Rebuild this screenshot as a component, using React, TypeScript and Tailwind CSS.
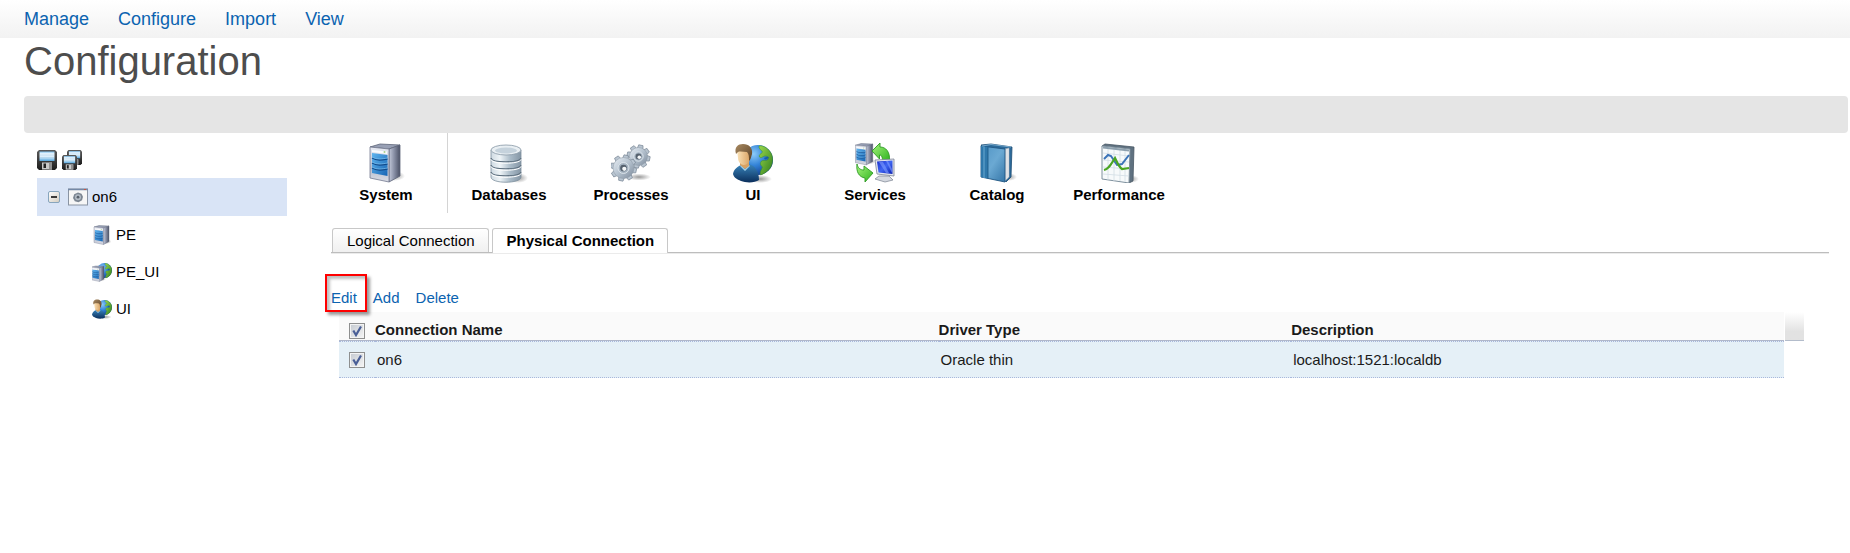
import { useState } from "react";
import type { ReactNode } from "react";

/* Gradients shared by all icons */
function Gradients() {
  return (
    <svg className="absolute size-0" aria-hidden="true">
      <defs>
        <linearGradient id="steel" x1="0" x2="1">
          <stop offset="0" stopColor="#c3c9da" />
          <stop offset=".45" stopColor="#8b92a8" />
          <stop offset="1" stopColor="#4b5166" />
        </linearGradient>
        <linearGradient id="steelFront" x1="0" x2="0" y1="0" y2="1">
          <stop offset="0" stopColor="#e9ecf4" />
          <stop offset=".6" stopColor="#b9bfcf" />
          <stop offset="1" stopColor="#d8dbe4" />
        </linearGradient>
        <linearGradient id="bluePanel" x1="0" x2="1" y1="0" y2="1">
          <stop offset="0" stopColor="#5fb4ee" />
          <stop offset="1" stopColor="#1765b4" />
        </linearGradient>
        <linearGradient id="drum" x1="0" x2="1">
          <stop offset="0" stopColor="#cfdae2" />
          <stop offset=".3" stopColor="#eef4f7" />
          <stop offset=".65" stopColor="#a9bac7" />
          <stop offset="1" stopColor="#8596a5" />
        </linearGradient>
        <linearGradient id="gearFill" x1="0" x2="1" y1="0" y2="1">
          <stop offset="0" stopColor="#e9eff5" />
          <stop offset=".5" stopColor="#b4c1ce" />
          <stop offset="1" stopColor="#7d8b9b" />
        </linearGradient>
        <radialGradient id="ocean" cx=".35" cy=".3" r=".75">
          <stop offset="0" stopColor="#8ccbf8" />
          <stop offset=".5" stopColor="#3484d8" />
          <stop offset="1" stopColor="#123f8f" />
        </radialGradient>
        <linearGradient id="land" x1="0" x2="1" y1="0" y2="1">
          <stop offset="0" stopColor="#9ad84c" />
          <stop offset="1" stopColor="#2f7d1c" />
        </linearGradient>
        <linearGradient id="shirt" x1="0" x2="0" y1="0" y2="1">
          <stop offset="0" stopColor="#3a86bd" />
          <stop offset="1" stopColor="#0b2f5c" />
        </linearGradient>
        <linearGradient id="skin" x1="0" x2="1">
          <stop offset="0" stopColor="#fbe3b8" />
          <stop offset="1" stopColor="#d9a263" />
        </linearGradient>
        <linearGradient id="hair" x1="0" x2="1" y1="0" y2="1">
          <stop offset="0" stopColor="#a98a62" />
          <stop offset="1" stopColor="#5a4024" />
        </linearGradient>
        <linearGradient id="arrow" x1="0" x2="1" y1="0" y2="1">
          <stop offset="0" stopColor="#a8f57e" />
          <stop offset="1" stopColor="#2fb31f" />
        </linearGradient>
        <linearGradient id="screen" x1="0" x2="1" y1="0" y2="1">
          <stop offset="0" stopColor="#1a2fc9" />
          <stop offset=".5" stopColor="#3f66f2" />
          <stop offset="1" stopColor="#0a1fb0" />
        </linearGradient>
        <linearGradient id="cover" x1="0" x2="1" y1="0" y2="1">
          <stop offset="0" stopColor="#4f93c4" />
          <stop offset=".5" stopColor="#6ba9d3" />
          <stop offset="1" stopColor="#3576a8" />
        </linearGradient>
        <linearGradient id="disk" x1="0" x2="0" y1="0" y2="1">
          <stop offset="0" stopColor="#5b5b5b" />
          <stop offset="1" stopColor="#1c1c1c" />
        </linearGradient>
        <linearGradient id="diskLabel" x1="0" x2="0" y1="0" y2="1">
          <stop offset="0" stopColor="#7cc0ee" />
          <stop offset=".25" stopColor="#f3faff" />
          <stop offset=".6" stopColor="#d5ecfa" />
          <stop offset="1" stopColor="#4fa3dd" />
        </linearGradient>
        <linearGradient id="expander" x1="0" x2="1" y1="0" y2="1">
          <stop offset="0" stopColor="#ffffff" />
          <stop offset="1" stopColor="#d3ccbf" />
        </linearGradient>
        <radialGradient id="shadow">
          <stop offset="0" stopColor="#555" stopOpacity=".6" />
          <stop offset="1" stopColor="#555" stopOpacity="0" />
        </radialGradient>
      </defs>
    </svg>
  );
}

function Server() {
  return (
    <g>
      <ellipse cx="28" cy="33" rx="11" ry="5" fill="url(#shadow)" />
      <path d="M4 4 14 1 34 2 23 6z" fill="#98a0b5" stroke="#5d6479" strokeWidth=".8" />
      <path d="M23 6 34 2V33L23 39z" fill="url(#steel)" stroke="#5d6479" strokeWidth=".8" />
      <path d="M4 4 23 6V39L4 35z" fill="url(#steelFront)" stroke="#737a8f" strokeWidth=".8" />
      <path d="M6 10 21.500 12V33L6 30z" fill="url(#bluePanel)" />
      <path d="M6 15c5 3 10 2 15.500 1M6 20c5 3 10 2 15.500 1M6 25c5 3 10 2 15.500 1" fill="none" stroke="#0f4a8c" strokeWidth="1.300" />
      <path d="M6 14c5 3 10 2 15.500 1M6 19c5 3 10 2 15.500 1M6 24c5 3 10 2 15.500 1" fill="none" stroke="#8fd0f8" strokeWidth=".6" />
      <path d="M6 7 21 8.500V11L6 9z" fill="#fafbfd" />
      <circle cx="18.500" cy="9" r="1" fill="#a9d08c" />
    </g>
  );
}

function Globe() {
  return (
    <g>
      <circle cx="25" cy="17" r="15" fill="url(#ocean)" />
      <path
        d="M26 3c5-1 10 3 12.500 8 2 5 1 11-2 15-3 3-6 5-9 6-1-3 1-5 2-8-2-2-3-3-1-6 2-1 4 0 6-1 2-2 0-4-2-4-3 0-4 3-6 1-1-3 2-3 3-5-1-2-4-3-3.500-6z"
        fill="url(#land)"
        stroke="#3f8f25"
        strokeWidth=".5"
      />
      <path d="M31 15l4-1.500 1 1.500-4 1.500z" fill="#1b5f9f" />
    </g>
  );
}

function UserGlobe() {
  return (
    <g>
      <ellipse cx="27" cy="36" rx="12" ry="4" fill="url(#shadow)" />
      <Globe />
      <path d="M0 31c1-5 4-7 8-9l8-1c6 2 10 7 10 16-4 3-13 3-18 1-4-2-7-3-8-7z" fill="url(#shirt)" />
      <path d="M8 22l4 4 4-4 1 1-5 5-5-5z" fill="#9ccdea" />
      <path d="M7 17h9v6l-4 3-5-4z" fill="#d9a263" />
      <path d="M4 7c0-4 13-4 13 1v7c0 4-3 7-6 7s-6-3-6-7z" fill="url(#skin)" />
      <path d="M3 11C1 4 5 1 10 1c6 0 10 4 9 10-1 3-1 5-3 7 0-4 0-7-2-9-3 0-7-1-9 0z" fill="url(#hair)" />
    </g>
  );
}

const TEETH = [0, 45, 90, 135, 180, 225, 270, 315];

function Gear({ cx, cy, r }: { cx: number; cy: number; r: number }) {
  return (
    <g transform={`translate(${cx} ${cy})`}>
      {TEETH.map((a) => (
        <path
          key={a}
          transform={`rotate(${a + 12})`}
          d={`M-3 ${-r + 2}L-2.200 ${-r - 2.500}H2.200L3 ${-r + 2}z`}
          fill="#b9c5d1"
          stroke="#7c8997"
          strokeWidth=".7"
        />
      ))}
      <circle r={r} fill="url(#gearFill)" stroke="#8c98a5" strokeWidth=".5" />
      <circle r={r * 0.52} fill="#a5b3c1" stroke="#e6edf3" strokeWidth=".8" />
      <circle r={r * 0.32} fill="#55616e" />
      <circle cx=".8" cy=".8" r={r * 0.2} fill="#f4f7f9" />
    </g>
  );
}

function Databases() {
  return (
    <g>
      <ellipse cx="29" cy="35" rx="10" ry="5" fill="url(#shadow)" />
      <path d="M2 7v27c0 7 30 7 30 0V7z" fill="url(#drum)" stroke="#7f909e" strokeWidth=".8" />
      <path d="M2 15c1 5 29 5 30 0M2 22c1 5 29 5 30 0M2 29c1 5 29 5 30 0" fill="none" stroke="#5c6e7d" strokeWidth="1.200" />
      <path d="M2 16.500c1 5 29 5 30 0M2 23.500c1 5 29 5 30 0M2 30.500c1 5 29 5 30 0" fill="none" stroke="#fff" strokeWidth="1" />
      <ellipse cx="17" cy="7" rx="15" ry="5" fill="#e9eff3" stroke="#8797a4" strokeWidth=".8" />
      <ellipse cx="17" cy="7.500" rx="11" ry="3" fill="#c5d2dc" />
    </g>
  );
}

function Processes() {
  return (
    <g>
      <ellipse cx="28" cy="34" rx="12" ry="3.500" fill="url(#shadow)" />
      <Gear cx={27.5} cy={13.5} r={9} />
      <Gear cx={12.5} cy={25} r={10.5} />
    </g>
  );
}

function Services() {
  return (
    <g>
      <g transform="translate(-2 0) scale(.58 .56)">
        <Server />
      </g>
      <path d="M17 8 25 0V4c6 0 10 5 9.500 13l-7 1c0-4-1-6-3-6v4z" fill="url(#arrow)" stroke="#2c9a22" strokeWidth=".9" />
      <path d="M2 21c1 4 3 6 7 6v-4l9 7-8 9v-4C4 34 1 29 2 21z" fill="url(#arrow)" stroke="#2c9a22" strokeWidth=".9" />
      <path d="M24 33h10l4 4-8 2-10-3z" fill="#d4d8df" stroke="#7a8290" strokeWidth=".7" />
      <path d="M20 17l19-1v17l-17-2z" fill="#e4e7ee" stroke="#7c8496" strokeWidth=".8" />
      <path d="M22 18.500l15.500-1V31L23.500 29.500z" fill="url(#screen)" />
      <path d="M24 19l4 0 6 11h-3zM31 18h2l4 8v4z" fill="#7f9cff" opacity=".6" />
    </g>
  );
}

function Catalog() {
  return (
    <g>
      <ellipse cx="31" cy="34" rx="9" ry="4" fill="url(#shadow)" />
      <path d="M4 2 14 1 35 4 34 34 29 39z" fill="#2c6a9a" stroke="#1d4d74" strokeWidth=".8" />
      <path d="M28 6 32 5V34l-4 4z" fill="#f1f3f5" stroke="#9aa6b1" strokeWidth=".6" />
      <path d="M30 6V36" stroke="#b9c2ca" strokeWidth=".7" />
      <path d="M4 3 28 6V39L4 34z" fill="url(#cover)" stroke="#1f5682" strokeWidth=".9" />
      <path d="M4 3 11 4V35.500L4 34z" fill="#2f78ab" />
      <path d="M7 3.500V35" stroke="#78b6dc" strokeWidth=".8" />
      <path d="M11 4V35.500" stroke="#1b5580" strokeWidth=".8" />
      <path d="M5 3 14 1.500 34 4" fill="none" stroke="#8bbddd" strokeWidth=".8" />
    </g>
  );
}

function Performance() {
  return (
    <g>
      <ellipse cx="31" cy="36" rx="9" ry="4" fill="url(#shadow)" />
      <path d="M3 3 6 1 35 4 34 38 30 40z" fill="#5f7180" stroke="#475763" strokeWidth=".8" />
      <path d="M3 3 31 6 30 40 3 36z" fill="#f7fafb" stroke="#7e909d" strokeWidth="1" />
      <path d="M9 4v33M15 5v33M21 6v32M26 6v33M4 10l26 3M4 17l26 2M4 24l26 2M4 31l26 2" stroke="#d2dde5" strokeWidth=".8" />
      <path d="M4 4.500 30 7.500" stroke="#8da0ae" strokeWidth="2" />
      <path d="M5 16 9 12l3 1 6 9 5-1 7-9" fill="none" stroke="#3c74b8" strokeWidth="2" />
      <path d="M5 27c5-1 7-6 11-12 3 6 4 9 7 11l7-1" fill="none" stroke="#4aa522" strokeWidth="2.200" />
    </g>
  );
}

function Icon({ children }: { children: ReactNode }) {
  return (
    <svg className="block size-10" viewBox="0 0 40 40" aria-hidden="true">
      {children}
    </svg>
  );
}

function SmallIcon({ children }: { children: ReactNode }) {
  return (
    <svg className="block size-5 shrink-0" viewBox="0 0 40 40" aria-hidden="true">
      {children}
    </svg>
  );
}

function Floppy() {
  return (
    <g>
      <path d="M2 0H18L20 2V18L18 20H2L0 18V2z" fill="url(#disk)" />
      <rect x="2.500" y="1.500" width="15" height="9.500" fill="url(#diskLabel)" />
      <path d="M3 5h14M3 7.500h14" stroke="#a9cfe8" strokeWidth=".6" />
      <rect x="5" y="12.500" width="10" height="7" fill="#c9c9c9" />
      <rect x="6.500" y="13.500" width="2.500" height="4.500" fill="#222" />
      <rect x="12" y="12.500" width="3" height="7" fill="#8f8f8f" />
    </g>
  );
}

function WindowGear() {
  return (
    <svg className="block size-5 shrink-0" viewBox="0 0 20 20" aria-hidden="true">
      <rect x=".5" y="2" width="19" height="16" fill="#f6f6f6" stroke="#8a94a3" />
      <path d="M0 2.500h20" stroke="#7488a6" strokeWidth="1.500" />
      <path d="M16 2.500h2" stroke="#c9533c" strokeWidth="1.200" />
      <path d="M10 5.500l3.500 1.200 1.500 3-1 3.500-3.500 2-3.700-1-1.800-3.200 1.200-3.800z" fill="#7c8692" />
      <circle cx="10" cy="10.200" r="3" fill="#b3bcc5" />
      <circle cx="10" cy="10.200" r="1.400" fill="#57606b" />
    </svg>
  );
}

const NAV = ["Manage", "Configure", "Import", "View"];

const SECTIONS = [
  { name: "System", art: <Server /> },
  { name: "Databases", art: <Databases /> },
  { name: "Processes", art: <Processes /> },
  { name: "UI", art: <UserGlobe /> },
  { name: "Services", art: <Services /> },
  { name: "Catalog", art: <Catalog /> },
  { name: "Performance", art: <Performance /> },
];

const NODES = [
  {
    name: "PE",
    art: <Server />,
  },
  {
    name: "PE_UI",
    art: (
      <g>
        <Globe />
        <g transform="translate(-4 7) scale(.82)">
          <Server />
        </g>
      </g>
    ),
  },
  { name: "UI", art: <UserGlobe /> },
];

function Tick({ label, checked, onChange }: { label: string; checked: boolean; onChange: (on: boolean) => void }) {
  return (
    <label className="relative block size-4">
      <input
        type="checkbox"
        aria-label={label}
        checked={checked}
        onChange={(e) => onChange(e.target.checked)}
        className="block size-4 appearance-none border border-[#8e8f8f] bg-linear-to-br from-[#c4c9d0] to-[#f6f6f6] outline-1 -outline-offset-2 outline-[#f4f4f4]"
      />
      {checked && (
        <svg className="pointer-events-none absolute inset-0 size-4" viewBox="0 0 16 16" aria-hidden="true">
          <path d="M4.300 7.500 7 12 12 3.500" fill="none" stroke="#4a5f97" strokeWidth="2.200" />
        </svg>
      )}
    </label>
  );
}

export default function App() {
  const [open, setOpen] = useState(true);
  const [row, setRow] = useState(true);

  return (
    <div className="min-h-screen bg-white font-['Liberation_Sans',Arial,sans-serif] text-[15px] leading-5 text-black">
      <Gradients />
      <nav className="flex h-[38px] items-center gap-[29px] bg-linear-to-b from-white to-[#f2f2f2] px-6 text-[18px] text-[#0b63b0]">
        {NAV.map((item) => (
          <a key={item} href="#">
            {item}
          </a>
        ))}
      </nav>

      <h1 className="px-6 pb-3 text-[40px] leading-[46px] text-[#4d4d4d]">Configuration</h1>
      <div className="ml-6 mr-0.5 h-[37px] rounded bg-[#e5e5e5]" />

      <div className="flex gap-[38px] pl-[37px] pr-[21px]">
        <aside className="w-[250px] shrink-0 pt-[17px]">
          <div className="flex gap-[5px] pb-2">
            <button type="button" aria-label="Save">
              <svg className="block size-5" viewBox="0 0 20 20" aria-hidden="true">
                <Floppy />
              </svg>
            </button>
            <button type="button" aria-label="Save all">
              <svg className="block size-5" viewBox="0 0 20 20" aria-hidden="true">
                <g transform="translate(5 0) scale(.75)">
                  <Floppy />
                </g>
                <g transform="translate(0 5) scale(.75)">
                  <Floppy />
                </g>
              </svg>
            </button>
          </div>
          <div className="flex h-[38px] items-center bg-[#d9e4f6] pl-[11px]">
            <button type="button" aria-label="Toggle on6" onClick={() => setOpen(!open)} className="mr-2">
              <svg className="block size-3" viewBox="0 0 12 12" aria-hidden="true">
                <rect x=".5" y=".5" width="11" height="11" rx="1.500" fill="url(#expander)" stroke="#87a5bd" />
                <path d={open ? "M3 6h6" : "M3 6h6M6 3v6"} stroke="#000" strokeWidth="1.500" />
              </svg>
            </button>
            <WindowGear />
            <span className="pl-1">on6</span>
          </div>
          {open && (
            <ul>
              {NODES.map((node) => (
                <li key={node.name} className="flex h-[37px] items-center gap-1 pl-[55px]">
                  <SmallIcon>{node.art}</SmallIcon>
                  <span>{node.name}</span>
                </li>
              ))}
            </ul>
          )}
        </aside>

        <main className="min-w-0 flex-1">
          <div className="flex h-20">
            {SECTIONS.map(({ name, art }) => (
              <a
                key={name}
                href="#"
                className="flex w-[122px] flex-col items-center gap-0.5 border-[#d4d4d4] pt-[10px] font-bold first:w-[123px] first:border-r"
              >
                <Icon>{art}</Icon>
                {name}
              </a>
            ))}
          </div>

          <div className="pl-[6px] pt-[15px]">
            <div role="tablist" className="flex gap-[3px] border-b border-[#bdbdbd] pl-px shadow-[0_1px_0_#ebebeb]">
              <button
                type="button"
                role="tab"
                aria-selected="false"
                className="h-6 rounded-t-[3px] border border-b-0 border-[#c8c8c8] bg-linear-to-b from-white to-[#f0f0f0] pl-[14px] pr-[13px]"
              >
                Logical Connection
              </button>
              <button
                type="button"
                role="tab"
                aria-selected="true"
                className="-mb-px h-[25px] rounded-t-[3px] border border-b-0 border-[#c8c8c8] bg-white pb-px pl-[14px] pr-[13px] font-bold"
              >
                Physical Connection
              </button>
            </div>

            <div className="flex gap-4 pt-[35px] text-[#0b63b0]">
              <a href="#" className="relative">
                Edit
                <span className="pointer-events-none absolute -left-1.5 -top-[14px] h-[38px] w-[42px] border-2 border-[#f00] shadow-[3px_3px_3px_rgba(0,0,0,0.4),inset_3px_3px_3px_rgba(0,0,0,0.25)]" />
              </a>
              <a href="#">Add</a>
              <a href="#">Delete</a>
            </div>

            <div className="flex items-start pl-2 pr-[25px] pt-1 text-[#1a1a1a]">
              <table className="w-full table-fixed border-separate border-spacing-0 text-left">
                <colgroup>
                  <col className="w-9" />
                  <col className="w-[39%]" />
                  <col className="w-[24.4%]" />
                  <col />
                </colgroup>
                <thead>
                  <tr className="h-[29px] bg-[#fafafa] *:border-b *:border-[#b0b7ca]">
                    <th className="pl-[10px] pt-2.5">
                      <Tick label="Select all connections" checked={row} onChange={setRow} />
                    </th>
                    <th className="pt-2">Connection Name</th>
                    <th className="pt-2">Driver Type</th>
                    <th className="pt-2">Description</th>
                  </tr>
                </thead>
                <tbody>
                  <tr className="h-[37px] bg-[#e5f0f7] *:border-y *:border-dotted *:border-[#a9b8dc]">
                    <td className="pl-[10px]">
                      <Tick label="Select on6" checked={row} onChange={setRow} />
                    </td>
                    <td className="pl-0.5">on6</td>
                    <td className="pl-0.5">Oracle thin</td>
                    <td className="pl-0.5">localhost:1521:localdb</td>
                  </tr>
                </tbody>
              </table>
              <div className="ml-px h-[29px] w-[19px] shrink-0 border-b border-[#b3bccb] bg-linear-to-b from-white to-[#e2e2e2] to-70%" />
            </div>
          </div>
        </main>
      </div>
    </div>
  );
}
